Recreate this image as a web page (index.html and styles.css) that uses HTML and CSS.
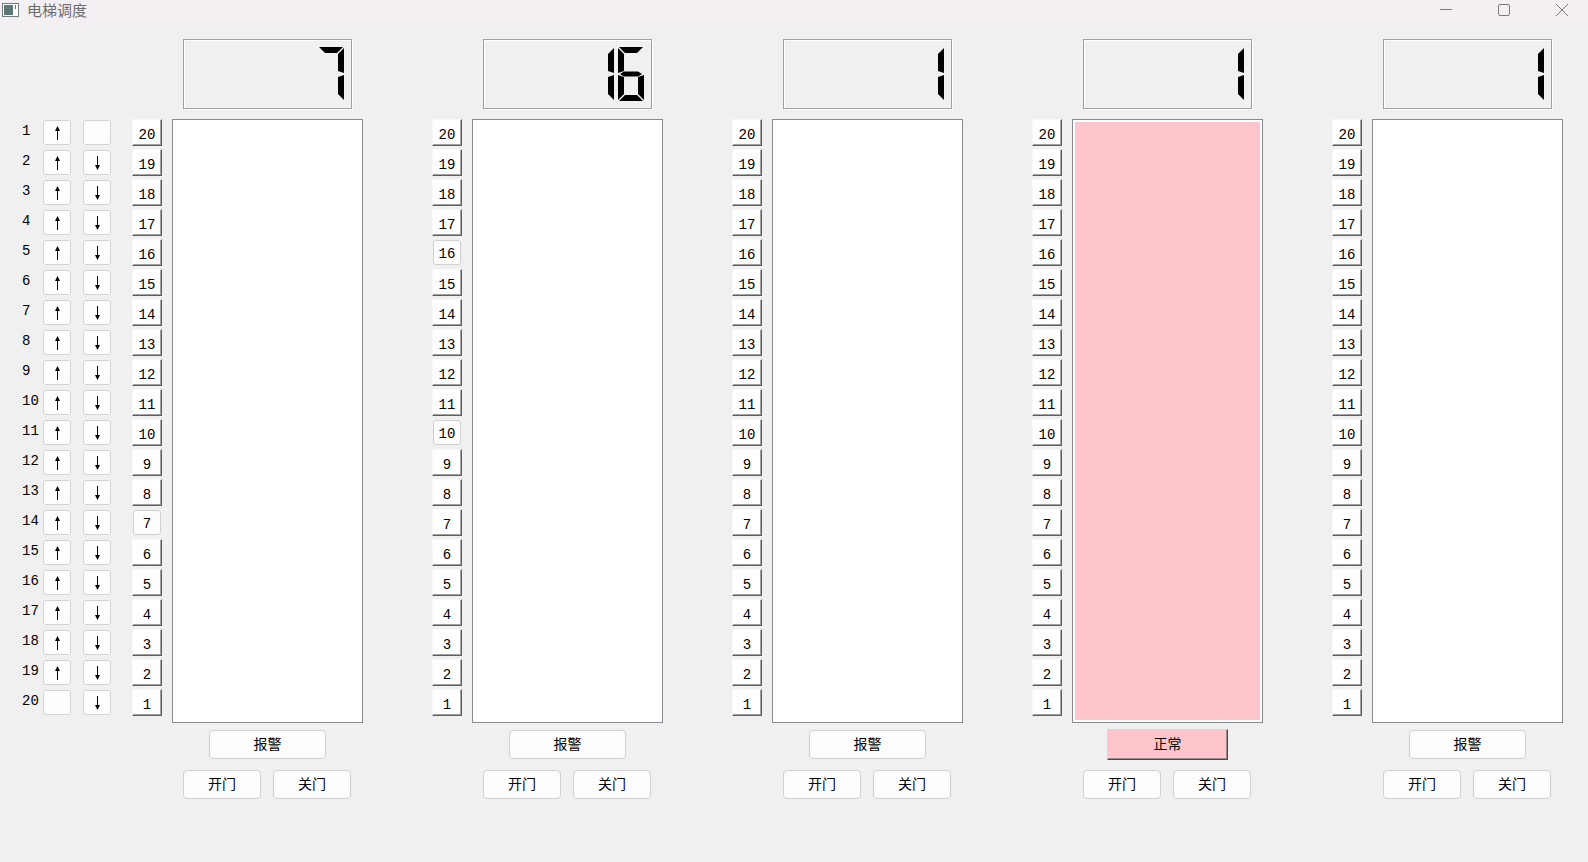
FILE: index.html
```html
<!DOCTYPE html>
<html lang="zh-CN">
<head>
  <meta charset="UTF-8">
  <title>电梯调度</title>
  <link rel="stylesheet" href="styles.css">
</head>
<body>
  <div class="titlebar">
    <svg class="app-icon" viewBox="0 0 17 14">
      <rect x="0.5" y="0.5" width="16" height="13" fill="#fff" stroke="#6f7f7f"/>
      <rect x="2" y="2" width="9" height="10" fill="#5e7777"/>
      <line x1="13.5" y1="2" x2="13.5" y2="6" stroke="#5e7777"/>
    </svg>
    <span class="title">电梯调度</span>
    <div class="controls">
      <svg viewBox="0 0 12 12"><line x1="0" y1="5.5" x2="12" y2="5.5"/></svg>
      <svg viewBox="0 0 12 12"><rect x="0.5" y="0.5" width="11" height="11" rx="1.5"/></svg>
      <svg viewBox="0 0 12 12"><line x1="0" y1="0" x2="12" y2="12"/><line x1="12" y1="0" x2="0" y2="12"/></svg>
    </div>
  </div>

  <div class="main">
    <div class="hall" id="hall"></div>
    <div class="cars" id="cars"></div>
  </div>

  <script>
    // Car state
    const cars = [
      { floor: 7, here: [7], status: '报警' },
      { floor: 16, here: [16, 10], status: '报警' },
      { floor: 1, here: [], status: '报警' },
      { floor: 1, here: [], status: '正常', normal: true },
      { floor: 1, here: [], status: '报警' }
    ];
    const FLOORS = 20;

    // Seven segment map
    const SEGS = {
      '0': 'abcdef', '1': 'bc', '2': 'abged', '3': 'abgcd', '4': 'fgbc',
      '5': 'afgcd', '6': 'afgedc', '7': 'abc', '8': 'abcdefg', '9': 'abcdfg', ' ': ''
    };

    const upArrow = '<svg class="arrow" viewBox="0 0 7 14"><polygon points="1,5 3.5,0 6,5"/><line x1="3.5" y1="3" x2="3.5" y2="14"/></svg>';
    const downArrow = '<svg class="arrow" viewBox="0 0 7 14"><polygon points="1,9 3.5,14 6,9"/><line x1="3.5" y1="0" x2="3.5" y2="11"/></svg>';

    // Hall call buttons
    let hall = '';
    for (let i = 1; i <= FLOORS; i++) {
      hall += '<div class="hall-row"><span class="hall-label">' + i + '</span>' +
        '<button class="hall-btn">' + (i < FLOORS ? upArrow : '') + '</button>' +
        '<button class="hall-btn">' + (i > 1 ? downArrow : '') + '</button></div>';
    }
    document.getElementById('hall').innerHTML = hall;

    function lcd(value) {
      const text = String(value).padStart(2, ' ');
      let html = '<div class="lcd" aria-label="' + value + '">';
      for (const ch of text) {
        html += '<div class="digit">';
        for (const s of SEGS[ch]) html += '<div class="seg seg-' + s + '"></div>';
        html += '</div>';
      }
      return html + '</div>';
    }

    // Cars
    let out = '';
    cars.forEach(car => {
      let floors = '';
      for (let f = FLOORS; f >= 1; f--) {
        floors += '<button class="floor-btn' + (car.here.includes(f) ? ' here' : '') + '">' + f + '</button>';
      }
      out += '<div class="car">' + lcd(car.floor) +
        '<div class="shaft"><div class="floors">' + floors + '</div>' +
        '<div class="cabin' + (car.normal ? ' cabin-normal' : '') + '"></div></div>' +
        '<button class="btn alarm' + (car.normal ? ' alarm-normal' : '') + '">' + car.status + '</button>' +
        '<div class="doors"><button class="btn door-btn">开门</button><button class="btn door-btn">关门</button></div>' +
        '</div>';
    });
    document.getElementById('cars').innerHTML = out;
  </script>
</body>
</html>
```

FILE: styles.css
```css
body { margin: 0; width: 1588px; height: 862px; overflow: hidden; background: #f0f0f0; font-family: "Liberation Mono", monospace; color: #000; }
button { font: inherit; color: inherit; padding: 0; margin: 0; box-sizing: border-box; }

.titlebar { height: 28px; background: #f3eff3; display: flex; align-items: flex-start; }
.app-icon { width: 17px; height: 14px; margin: 3px 0 0 2px; }
.title { margin-left: 8px; font: 15px/19px "Noto Sans CJK SC", sans-serif; color: #6e6e6e; }
.controls { margin-left: auto; height: 20px; display: flex; align-items: center; gap: 46px; padding-right: 20px; }
.controls svg { width: 12px; height: 12px; fill: none; stroke: #7c7c7c; stroke-width: 1; }

.main { display: flex; padding: 11px 0 0 22px; }

.hall { margin-top: 80px; display: flex; flex-direction: column; }
.hall-row { height: 30px; display: flex; align-items: flex-start; }
.hall-label { width: 21px; font-size: 14px; line-height: 25px; font-weight: 300; }
.hall-btn { width: 28px; height: 25px; margin-top: 1px; border: 1px solid #d3d3d3; border-radius: 3px; background: #fdfdfd; display: flex; align-items: center; justify-content: center; }
.hall-btn + .hall-btn { margin-left: 12px; }
.arrow { width: 7px; height: 14px; fill: #000; stroke: #000; stroke-width: 1; }
.arrow polygon { stroke: none; }

.cars { display: flex; gap: 69px; margin-left: 21px; }
.car { width: 231px; display: flex; flex-direction: column; }

.lcd { margin-left: 51px; width: 169px; height: 70px; box-sizing: border-box; border: 1px solid #a0a0a0; box-shadow: inset 1px 1px #fff, 1px 1px #fff; display: flex; justify-content: flex-end; gap: 4px; padding: 7px 7px 0 0; }
.digit { position: relative; width: 26px; height: 54px; }
.seg { position: absolute; inset: 0; background: #000; }
.seg-a { clip-path: polygon(1px 0, 25px 0, 19px 6px, 7px 6px); }
.seg-b { clip-path: polygon(20px 7px, 26px 1px, 26px 26px, 20px 24px); }
.seg-c { clip-path: polygon(20px 30px, 26px 28px, 26px 53px, 20px 47px); }
.seg-d { clip-path: polygon(7px 48px, 19px 48px, 25px 54px, 1px 54px); }
.seg-e { clip-path: polygon(0 28px, 6px 30px, 6px 47px, 0 53px); }
.seg-f { clip-path: polygon(0 1px, 6px 7px, 6px 24px, 0 26px); }
.seg-g { clip-path: polygon(2px 27px, 6px 24.5px, 20px 24.5px, 24px 27px, 20px 29.5px, 6px 29.5px); }

.shaft { display: flex; gap: 10px; margin-top: 10px; }
.floors { width: 30px; display: flex; flex-direction: column; gap: 3px; }
.floor-btn { height: 27px; font-size: 14px; padding-top: 5px; line-height: 20px; text-align: center; background: #fff; border: 1px solid; border-color: #f8f8f8 #5f5f5f #5f5f5f #f8f8f8; box-shadow: inset -1px -1px #a0a0a0; }
.floor-btn.here { margin: 1px; height: 25px; padding-top: 2px; line-height: 20px; border: 1px solid #d0d0d0; border-radius: 3px; background: #fdfdfd; box-shadow: none; }
.cabin { width: 191px; height: 604px; box-sizing: border-box; border: 1px solid #868a91; background: #fff; }
.cabin-normal { background: #ffc5cc; box-shadow: inset 0 0 0 2px #fff; }

.btn { border: 1px solid #d0d0d0; border-radius: 4px; background: #fdfdfd; font: 14px/20px "Noto Sans CJK SC", sans-serif; padding-bottom: 3px; }
.alarm { margin: 7px 0 0 77px; width: 117px; height: 29px; }
.alarm-normal { margin: 6px 0 -1px 75px; width: 121px; height: 31px; border-radius: 0; background: #ffc5cc; border-color: #ffc5cc #4a4a4a #4a4a4a #ffc5cc; box-shadow: inset -1px -1px #9a8a8c; }
.doors { display: flex; gap: 12px; margin: 11px 0 0 51px; }
.door-btn { width: 78px; height: 29px; }
```
